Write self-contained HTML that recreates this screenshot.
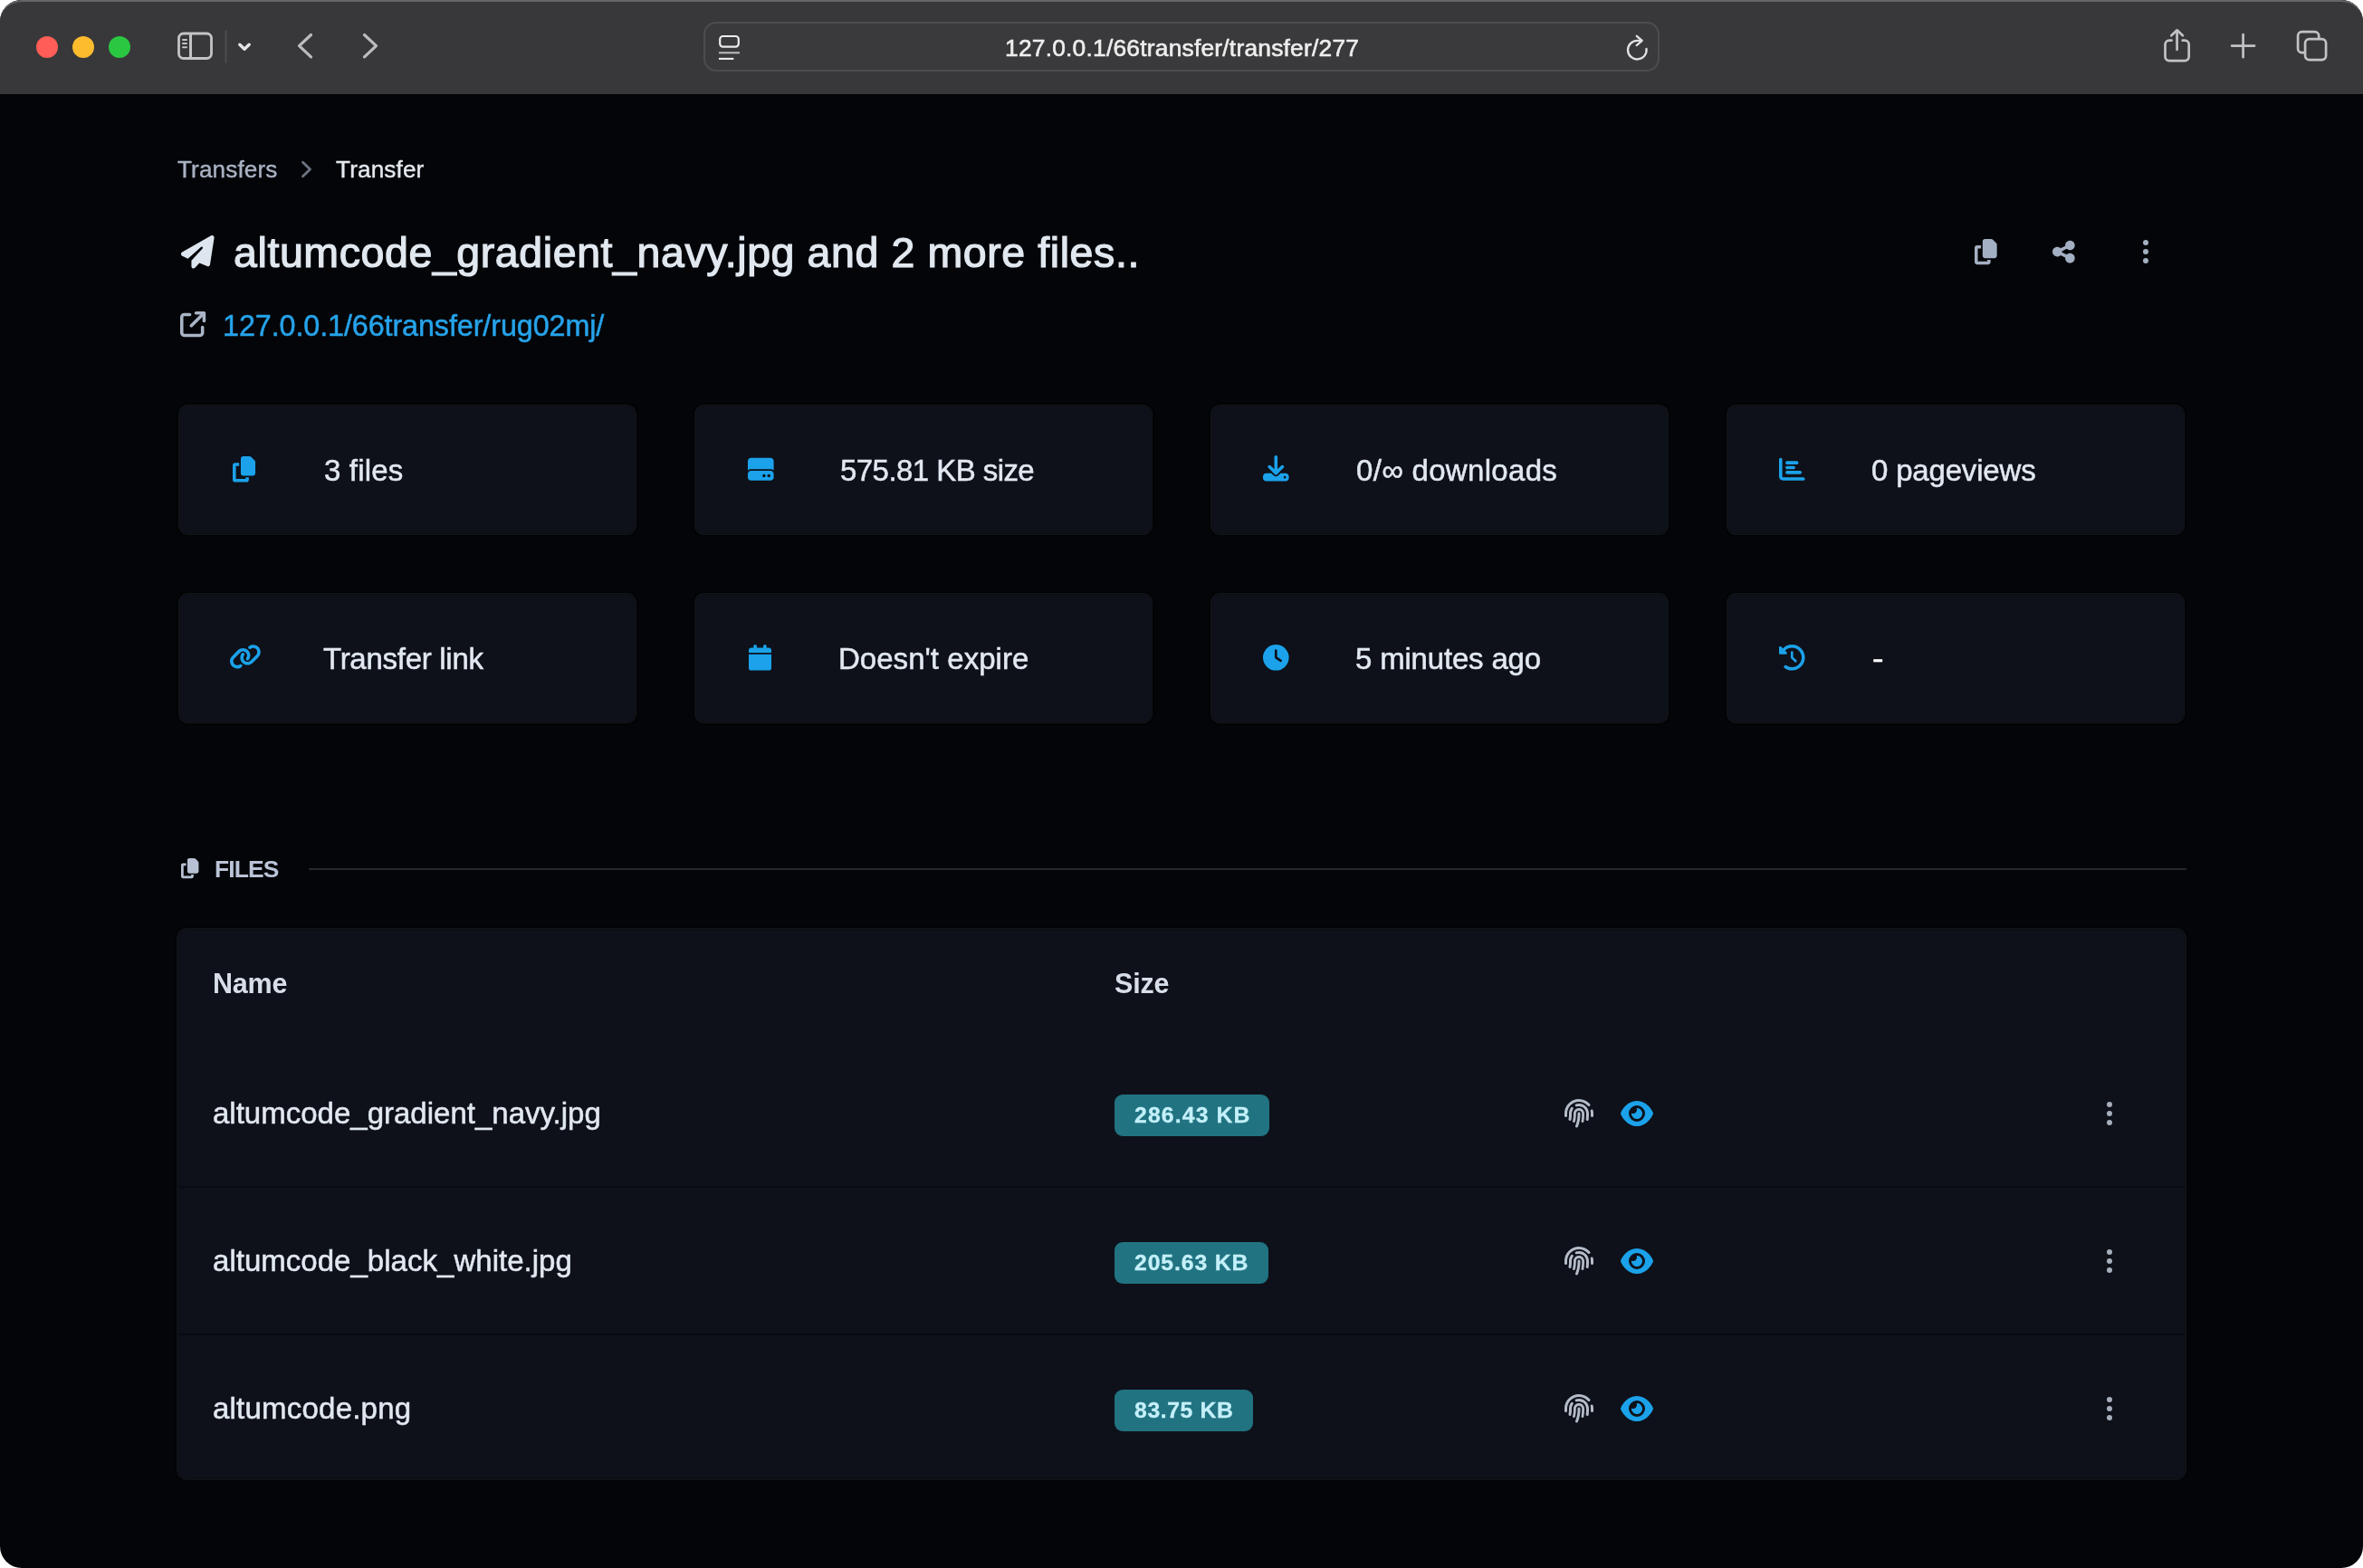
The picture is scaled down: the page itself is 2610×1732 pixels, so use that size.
<!DOCTYPE html>
<html lang="en"><head><meta charset="utf-8"><title>Transfer</title>
<style>
html,body{margin:0;padding:0;background:#fff;}
body{width:2610px;height:1732px;overflow:hidden;position:relative;font-family:"Liberation Sans",sans-serif;}
.win{position:absolute;left:0;top:0;width:2610px;height:1732px;border-radius:24px;background:#040508;overflow:hidden;}
.bar{position:absolute;left:0;top:0;width:2610px;height:104px;background:#38383a;}
.bar:before{content:"";position:absolute;left:0;top:0;width:2610px;height:60px;box-sizing:border-box;border-top:2px solid #656567;border-radius:24px 24px 0 0;}
.dot{position:absolute;width:24.6px;height:24.6px;border-radius:50%;top:39.7px;}
.url{position:absolute;left:777px;top:24px;width:1056px;height:55px;box-sizing:border-box;border:2px solid #4d4d4f;border-radius:14px;background:#3a3a3c;}
.ic{position:absolute;overflow:visible;}
.t{position:absolute;white-space:nowrap;line-height:1;will-change:transform;}
.card{position:absolute;width:506.4px;height:144.4px;box-sizing:border-box;background:#0e111a;border:1px solid #121618;box-shadow:inset 0 0 0 1px #0c1014,0 0 0 1.500px #020305;border-radius:10px;}
.tbl{position:absolute;left:194.800px;top:1024.800px;width:2220.100px;height:610.400px;box-sizing:border-box;background:#0e111a;border:1px solid #121618;box-shadow:inset 0 0 0 1px #0c1014,0 0 0 1.500px #020305;border-radius:11px;}
.sep{position:absolute;left:196.800px;width:2216.100px;height:2px;background:#080b12;}
.badge{position:absolute;height:46.2px;background:#217381;border-radius:9px;}
.hr{position:absolute;left:341px;top:959px;width:2074px;height:2px;background:#25282e;}
</style></head><body><div class="win">
<div class="bar">
<div class="dot" style="left:39.8px;background:#fe5e57"></div>
<div class="dot" style="left:79.8px;background:#fcbc2e"></div>
<div class="dot" style="left:119.7px;background:#2ac840"></div>

<svg class="ic" style="left:190px;top:28px" width="240" height="50" viewBox="190 28 240 50" fill="none" stroke-linecap="round" stroke-linejoin="round">
<rect x="197.500" y="37" width="36" height="27.500" rx="5.200" stroke="#c4c4c6" stroke-width="2.800"/>
<path d="M210.500 37.500V64" stroke="#c4c4c6" stroke-width="3"/>
<path d="M202 44h4M202 48h4M202 52.300h4" stroke="#c4c4c6" stroke-width="2"/>
<path d="M249.500 34.500V69" stroke="#4c4c4f" stroke-width="2"/>
<path d="M264.800 49.200l5.200 5 5.200-5" stroke="#e6e6e6" stroke-width="3.400"/>
<path d="M343.500 38.500L330.500 50.700l13 12.200" stroke="#bdbdbf" stroke-width="3.200"/>
<path d="M402.500 38.500l13 12.200-13 12.200" stroke="#bdbdbf" stroke-width="3.200"/>
</svg>
<div class="url"></div>
<svg class="ic" style="left:790px;top:34px" width="36" height="36" viewBox="790 34 36 36" fill="none" stroke-linecap="butt">
<rect x="795.200" y="40" width="20.600" height="11.600" rx="3.300" stroke="#ececec" stroke-width="2.200"/>
<path d="M794 58.300h23" stroke="#b9b9bb" stroke-width="2.100"/>
<path d="M794 64.900h16.300" stroke="#ececec" stroke-width="2.100"/>
</svg>
<svg class="ic" style="left:1790px;top:34px" width="40" height="40" viewBox="1790 34 40 40" fill="none" stroke="#e2e2e4" stroke-width="2.300" stroke-linecap="round" stroke-linejoin="round">
<path d="M1818.500 53.800A10.300 10.300 0 1 1 1808.300 44.900H1813"/>
<path d="M1807.800 39.800l5.900 5.100-6 5.200"/>
</svg>
<svg class="ic" style="left:2380px;top:26px" width="200" height="50" viewBox="2380 26 200 50" fill="none" stroke="#c2c2c4" stroke-width="2.700" stroke-linecap="round" stroke-linejoin="round">
<path d="M2398.500 44.700h-2.500a4.500 4.500 0 0 0-4.500 4.500v13.400a4.500 4.500 0 0 0 4.500 4.500h17.200a4.500 4.500 0 0 0 4.500-4.500V49.200a4.500 4.500 0 0 0-4.500-4.500h-2.500"/>
<path d="M2404.600 54.800V33.800M2398.300 39.300l6.300-6 6.300 6"/>
<path d="M2477.600 38.200v25M2465.100 50.600h25"/>
<path d="M2545 58.200h-2.400a4.500 4.500 0 0 1-4.500-4.500V39.600a4.500 4.500 0 0 1 4.500-4.500h14.100a4.500 4.500 0 0 1 4.500 4.500v2.300"/>
<rect x="2546.100" y="43.100" width="23" height="23" rx="4.500"/>
</svg>
</div>

<svg class="ic" style="left:330px;top:174px" width="20" height="26" viewBox="330 174 20 26" fill="none" stroke="#6b7482" stroke-width="2.800" stroke-linecap="round" stroke-linejoin="round"><path d="M334.500 179.200l8 7.800-8 7.800"/></svg>
<svg class="ic" style="left:200.20px;top:259.60px" width="36.60" height="36.60" viewBox="0 0 512 512"><path fill="#dde6ee" d="M498.100 5.600c10.100 7 15.400 19.100 13.500 31.200l-64 416c-1.500 9.700-7.400 18.200-16 23s-18.900 5.400-28 1.600L284 427.700l-68.500 74.100c-8.900 9.700-22.900 12.900-35.200 8.100S160 493.200 160 480V396.400c0-4 1.500-7.800 4.200-10.700L331.800 202.800c5.800-6.300 5.600-16-.4-22s-15.700-6.400-22-.7L106 360.800 17.700 316.600C7.100 311.300 .3 300.700 0 288.900s5.900-22.800 16.100-28.700l448-256c10.700-6.100 23.900-5.500 34 1.400z"/></svg>
<svg class="ic" style="left:199.30px;top:343.90px" width="28.20" height="28.20" viewBox="0 0 512 512"><path fill="#a9b5c6" d="M320 0c-17.700 0-32 14.300-32 32s14.300 32 32 32h82.700L201.400 265.400c-12.500 12.500-12.500 32.800 0 45.300s32.800 12.500 45.300 0L448 109.300V192c0 17.700 14.300 32 32 32s32-14.300 32-32V32c0-17.700-14.300-32-32-32H320zM80 32C35.800 32 0 67.800 0 112V432c0 44.200 35.800 80 80 80H400c44.200 0 80-35.800 80-80V320c0-17.700-14.300-32-32-32s-32 14.300-32 32V432c0 8.800-7.200 16-16 16H80c-8.800 0-16-7.200-16-16V112c0-8.800 7.200-16 16-16H192c17.700 0 32-14.300 32-32s-14.300-32-32-32H80z"/></svg>
<svg class="ic" style="left:2181.00px;top:264.00px" width="24.68" height="28.20" viewBox="0 0 448 512"><path fill="#a3afc2" d="M208 0H332.100c12.700 0 24.900 5.100 33.900 14.100l67.900 67.900c9 9 14.100 21.200 14.100 33.900V336c0 26.500-21.500 48-48 48H208c-26.500 0-48-21.500-48-48V48c0-26.500 21.500-48 48-48zM48 128h80v64H64V448H256V416h64v48c0 26.500-21.500 48-48 48H48c-26.500 0-48-21.500-48-48V176c0-26.500 21.500-48 48-48z"/></svg>
<svg class="ic" style="left:2267.00px;top:264.00px" width="24.68" height="28.20" viewBox="0 0 448 512"><path fill="#a3afc2" d="M352 224c53 0 96-43 96-96s-43-96-96-96s-96 43-96 96c0 4 .2 8 .7 11.900l-94.100 47C145.400 170.200 121.900 160 96 160c-53 0-96 43-96 96s43 96 96 96c25.900 0 49.400-10.200 66.600-26.900l94.100 47c-.5 3.900-.7 7.800-.7 11.900c0 53 43 96 96 96s96-43 96-96s-43-96-96-96c-25.900 0-49.400 10.200-66.600 26.900l-94.100-47c.5-3.900 .7-7.800 .7-11.900s-.2-8-.7-11.900l94.100-47C302.600 213.800 326.100 224 352 224z"/></svg>
<div style="position:absolute;left:2366.600px;top:264.5px;width:6.800px;height:6.800px;border-radius:50%;background:#a3afc2"></div>
<div style="position:absolute;left:2366.600px;top:274.5px;width:6.800px;height:6.800px;border-radius:50%;background:#a3afc2"></div>
<div style="position:absolute;left:2366.600px;top:284.5px;width:6.800px;height:6.800px;border-radius:50%;background:#a3afc2"></div>
<div class="card" style="left:196.7px;top:446.7px"></div>
<div class="card" style="left:766.7px;top:446.7px"></div>
<div class="card" style="left:1336.7px;top:446.7px"></div>
<div class="card" style="left:1906.7px;top:446.7px"></div>
<div class="card" style="left:196.7px;top:654.8px"></div>
<div class="card" style="left:766.7px;top:654.8px"></div>
<div class="card" style="left:1336.7px;top:654.8px"></div>
<div class="card" style="left:1906.7px;top:654.8px"></div>
<svg class="ic" style="left:257.20px;top:503.60px" width="25.03" height="28.60" viewBox="0 0 448 512"><path fill="#1ba2ea" d="M208 0H332.100c12.700 0 24.900 5.100 33.900 14.100l67.900 67.900c9 9 14.100 21.200 14.100 33.900V336c0 26.500-21.500 48-48 48H208c-26.500 0-48-21.500-48-48V48c0-26.500 21.500-48 48-48zM48 128h80v64H64V448H256V416h64v48c0 26.500-21.500 48-48 48H48c-26.500 0-48-21.500-48-48V176c0-26.500 21.500-48 48-48z"/></svg>
<svg class="ic" style="left:825.80px;top:503.70px" width="28.60" height="28.60" viewBox="0 0 512 512"><path fill="#1ba2ea" d="M0 96C0 60.700 28.700 32 64 32H448c35.300 0 64 28.700 64 64V280.400c-17-15.200-39.400-24.400-64-24.400H64c-24.600 0-47 9.200-64 24.400V96zM64 288H448c35.300 0 64 28.700 64 64v64c0 35.300-28.700 64-64 64H64c-35.300 0-64-28.700-64-64V352c0-35.300 28.700-64 64-64zM320 416a32 32 0 1 0 0-64 32 32 0 1 0 0 64zm128-32a32 32 0 1 0 -64 0 32 32 0 1 0 64 0z"/></svg>
<svg class="ic" style="left:1395.40px;top:503.40px" width="28.60" height="28.60" viewBox="0 0 512 512"><path fill="#1ba2ea" d="M288 32c0-17.700-14.300-32-32-32s-32 14.300-32 32V274.700l-73.400-73.400c-12.500-12.500-32.800-12.500-45.300 0s-12.500 32.800 0 45.300l128 128c12.500 12.500 32.800 12.500 45.300 0l128-128c12.500-12.500 12.500-32.800 0-45.300s-32.800-12.500-45.300 0L288 274.700V32zM64 352c-35.300 0-64 28.700-64 64v32c0 35.300 28.700 64 64 64H448c35.300 0 64-28.700 64-64V416c0-35.300-28.700-64-64-64H346.500l-45.300 45.300c-25 25-65.500 25-90.500 0L165.500 352H64zm368 56a24 24 0 1 1 0 48 24 24 0 1 1 0-48z"/></svg>
<svg class="ic" style="left:1965.30px;top:503.80px" width="28.60" height="28.60" viewBox="0 0 512 512"><path fill="#1ba2ea" d="M32 32c17.700 0 32 14.300 32 32V400c0 8.800 7.200 16 16 16H480c17.700 0 32 14.300 32 32s-14.300 32-32 32H80c-44.200 0-80-35.800-80-80V64C0 46.300 14.300 32 32 32zm96 96c0-17.700 14.300-32 32-32l192 0c17.700 0 32 14.300 32 32s-14.300 32-32 32l-192 0c-17.700 0-32-14.300-32-32zm32 64H288c17.700 0 32 14.300 32 32s-14.300 32-32 32H160c-17.700 0-32-14.300-32-32s14.300-32 32-32zm0 96H416c17.700 0 32 14.300 32 32s-14.300 32-32 32H160c-17.700 0-32-14.300-32-32s14.300-32 32-32z"/></svg>
<svg class="ic" style="left:252.50px;top:711.20px" width="35.75" height="28.60" viewBox="0 0 640 512"><path fill="#1ba2ea" d="M579.800 267.700c56.500-56.500 56.500-148 0-204.500c-50-50-128.800-56.500-186.300-15.400l-1.600 1.100c-14.400 10.300-17.700 30.300-7.400 44.600s30.300 17.700 44.600 7.400l1.600-1.100c32.100-22.900 76-19.300 103.800 8.600c31.500 31.500 31.500 82.500 0 114L422.300 334.800c-31.500 31.500-82.500 31.500-114 0c-27.900-27.900-31.500-71.800-8.600-103.800l1.100-1.600c10.300-14.400 6.900-34.400-7.400-44.600s-34.400-6.900-44.600 7.400l-1.100 1.600C206.500 251.200 213 330 263 380c56.500 56.500 148 56.500 204.500 0L579.800 267.700zM60.200 244.300c-56.500 56.500-56.500 148 0 204.500c50 50 128.800 56.500 186.300 15.400l1.600-1.100c14.400-10.300 17.700-30.300 7.400-44.600s-30.300-17.700-44.600-7.400l-1.600 1.100c-32.100 22.900-76 19.300-103.800-8.600C74 372 74 321 105.500 289.500L217.700 177.200c31.500-31.500 82.500-31.500 114 0c27.900 27.900 31.500 71.800 8.600 103.900l-1.100 1.600c-10.300 14.400-6.900 34.400 7.400 44.600s34.400 6.900 44.600-7.400l1.100-1.600C433.500 260.800 427 182 377 132c-56.500-56.500-148-56.500-204.500 0L60.200 244.300z"/></svg>
<svg class="ic" style="left:827.20px;top:711.70px" width="25.03" height="28.60" viewBox="0 0 448 512"><path fill="#1ba2ea" d="M96 32V64H48C21.500 64 0 85.500 0 112v48H448V112c0-26.500-21.500-48-48-48H352V32c0-17.700-14.300-32-32-32s-32 14.300-32 32V64H160V32c0-17.700-14.300-32-32-32S96 14.300 96 32zM448 192H0V464c0 26.500 21.500 48 48 48H400c26.500 0 48-21.500 48-48V192z"/></svg>
<svg class="ic" style="left:1395.20px;top:711.70px" width="28.60" height="28.60" viewBox="0 0 512 512"><path fill="#1ba2ea" d="M256 0a256 256 0 1 1 0 512A256 256 0 1 1 256 0zM232 120V256c0 8 4 15.500 10.700 20l96 64c11 7.400 25.900 4.400 33.300-6.700s4.400-25.900-6.700-33.300L280 243.200V120c0-13.300-10.700-24-24-24s-24 10.700-24 24z"/></svg>
<svg class="ic" style="left:1965.00px;top:711.70px" width="28.60" height="28.60" viewBox="0 0 512 512"><path fill="#1ba2ea" d="M75 75L41 41C25.900 25.900 0 36.600 0 57.900V168c0 13.300 10.700 24 24 24H134.100c21.400 0 32.100-25.900 17-41l-30.800-30.800C155 85.500 203 64 256 64c106 0 192 86 192 192s-86 192-192 192c-40.800 0-78.600-12.700-109.700-34.400c-14.500-10.100-34.400-6.600-44.600 7.900s-6.600 34.400 7.900 44.600C151.200 495 201.700 512 256 512c141.400 0 256-114.600 256-256S397.400 0 256 0C185.300 0 121.300 28.700 75 75zm181 53c-13.300 0-24 10.700-24 24V256c0 6.400 2.500 12.500 7 17l72 72c9.400 9.400 24.600 9.400 33.900 0s9.400-24.600 0-33.900l-65-65V152c0-13.300-10.700-24-24-24z"/></svg>
<svg class="ic" style="left:200.40px;top:948.00px" width="19.43" height="22.20" viewBox="0 0 448 512"><path fill="#b7c1d3" d="M208 0H332.100c12.700 0 24.900 5.100 33.900 14.100l67.900 67.900c9 9 14.100 21.200 14.100 33.900V336c0 26.500-21.500 48-48 48H208c-26.500 0-48-21.500-48-48V48c0-26.500 21.500-48 48-48zM48 128h80v64H64V448H256V416h64v48c0 26.500-21.500 48-48 48H48c-26.500 0-48-21.500-48-48V176c0-26.500 21.500-48 48-48z"/></svg>
<div class="hr"></div>
<div class="tbl"></div>
<div class="sep" style="top:1310px"></div>
<div class="sep" style="top:1473px"></div>
<div class="badge" style="left:1231px;top:1208.5px;width:171px"></div>
<svg class="ic" style="left:1727.80px;top:1214.00px" width="32.00" height="32.00" viewBox="0 0 512 512"><path fill="#b4bcc9" d="M48 256C48 141.100 141.100 48 256 48c63.100 0 119.600 28.100 157.800 72.500c8.600 10.100 23.800 11.200 33.800 2.600s11.200-23.800 2.600-33.800C403.300 34.600 333.700 0 256 0C114.600 0 0 114.600 0 256v40c0 13.300 10.700 24 24 24s24-10.700 24-24V256zm458.500-52.900c-2.700-13-15.500-21.300-28.400-18.500s-21.300 15.500-18.500 28.400c2.900 13.900 4.500 28.300 4.500 43.100v40c0 13.300 10.700 24 24 24s24-10.700 24-24V256c0-18.100-1.900-35.800-5.500-52.900zM256 80c-19 0-37.400 3-54.500 8.600c-15.200 5-18.700 23.700-8.300 35.900c7.100 8.300 18.800 10.800 29.400 7.900c10.600-2.900 21.800-4.400 33.400-4.400c70.700 0 128 57.300 128 128v24.900c0 25.200-1.500 50.300-4.400 75.300c-1.700 14.600 9.400 27.800 24.200 27.800c11.800 0 21.900-8.600 23.300-20.300c3.300-27.400 5-55 5-82.700V256c0-97.200-78.800-176-176-176zM150.700 148.700c-9.100-10.600-25.300-11.400-33.900-.4C93.700 178 80 215.400 80 256v24.900c0 24.200-2.600 48.400-7.800 71.900C68.800 368.400 80.100 384 96.100 384c10.500 0 19.900-7 22.200-17.300c6.400-28.100 9.700-56.800 9.700-85.800V256c0-27.200 8.500-52.400 22.900-73.100c7.200-10.400 8-24.600-.2-34.200zM256 160c-53 0-96 43-96 96v24.900c0 35.900-4.600 71.500-13.800 106.100c-3.800 14.300 6.700 29 21.500 29c9.500 0 17.900-6.200 20.400-15.400c10.500-39 15.900-79.200 15.900-119.700V256c0-28.700 23.300-52 52-52s52 23.300 52 52v24.900c0 36.300-3.500 72.400-10.400 107.900c-2.700 13.900 7.700 27.200 21.800 27.200c10.200 0 19-7 21-17c7.700-38.800 11.600-78.300 11.600-118.100V256c0-53-43-96-96-96zm24 96c0-13.300-10.700-24-24-24s-24 10.700-24 24v24.900c0 59.900-11 119.300-32.500 175.200l-5.900 15.300c-4.800 12.400 1.400 26.300 13.800 31s26.300-1.400 31-13.800l5.900-15.300C267.900 411.900 280 346.700 280 280.900V256z"/></svg>
<svg class="ic" style="left:1790.00px;top:1214.00px" width="36.00" height="32.00" viewBox="0 0 576 512"><path fill="#1ba2ea" d="M288 32c-80.800 0-145.500 36.800-192.600 80.600C48.600 156 17.300 208 2.500 243.700c-3.300 7.900-3.300 16.700 0 24.600C17.300 304 48.600 356 95.400 399.400C142.500 443.200 207.200 480 288 480s145.500-36.800 192.600-80.600c46.800-43.500 78.100-95.400 93-131.100c3.300-7.900 3.300-16.700 0-24.600c-14.900-35.700-46.200-87.700-93-131.100C433.500 68.800 368.800 32 288 32zM144 256a144 144 0 1 1 288 0 144 144 0 1 1 -288 0zm144-64c0 35.300-28.700 64-64 64c-7.100 0-13.900-1.200-20.300-3.300c-5.500-1.800-11.900 1.600-11.700 7.400c.3 6.900 1.300 13.800 3.200 20.700c13.700 51.200 66.400 81.600 117.600 67.900s81.600-66.400 67.900-117.600c-11.100-41.500-47.800-69.400-88.600-71.100c-5.800-.2-9.200 6.100-7.400 11.700c2.100 6.400 3.300 13.200 3.300 20.300z"/></svg>
<div style="position:absolute;left:2326.600px;top:1216.6px;width:6.800px;height:6.800px;border-radius:50%;background:#a7aebb"></div>
<div style="position:absolute;left:2326.600px;top:1226.6px;width:6.800px;height:6.800px;border-radius:50%;background:#a7aebb"></div>
<div style="position:absolute;left:2326.600px;top:1236.6px;width:6.800px;height:6.800px;border-radius:50%;background:#a7aebb"></div>
<div class="badge" style="left:1231px;top:1371.5px;width:170.1px"></div>
<svg class="ic" style="left:1727.80px;top:1377.00px" width="32.00" height="32.00" viewBox="0 0 512 512"><path fill="#b4bcc9" d="M48 256C48 141.100 141.100 48 256 48c63.100 0 119.600 28.100 157.800 72.500c8.600 10.100 23.800 11.200 33.800 2.600s11.200-23.800 2.600-33.800C403.300 34.600 333.700 0 256 0C114.600 0 0 114.600 0 256v40c0 13.300 10.700 24 24 24s24-10.700 24-24V256zm458.500-52.900c-2.700-13-15.500-21.300-28.400-18.500s-21.300 15.500-18.500 28.400c2.900 13.900 4.500 28.300 4.500 43.100v40c0 13.300 10.700 24 24 24s24-10.700 24-24V256c0-18.100-1.900-35.800-5.500-52.900zM256 80c-19 0-37.400 3-54.500 8.600c-15.200 5-18.700 23.700-8.300 35.900c7.100 8.300 18.800 10.800 29.400 7.900c10.600-2.900 21.800-4.400 33.400-4.400c70.700 0 128 57.300 128 128v24.900c0 25.200-1.500 50.300-4.400 75.300c-1.700 14.600 9.400 27.800 24.200 27.800c11.800 0 21.900-8.600 23.300-20.300c3.300-27.400 5-55 5-82.700V256c0-97.200-78.800-176-176-176zM150.700 148.700c-9.100-10.600-25.300-11.400-33.900-.4C93.700 178 80 215.400 80 256v24.900c0 24.200-2.600 48.400-7.800 71.900C68.800 368.400 80.100 384 96.100 384c10.500 0 19.900-7 22.200-17.300c6.400-28.100 9.700-56.800 9.700-85.800V256c0-27.200 8.500-52.400 22.900-73.100c7.200-10.400 8-24.600-.2-34.200zM256 160c-53 0-96 43-96 96v24.900c0 35.900-4.600 71.500-13.800 106.100c-3.800 14.300 6.700 29 21.500 29c9.500 0 17.900-6.200 20.400-15.400c10.500-39 15.900-79.200 15.900-119.700V256c0-28.700 23.300-52 52-52s52 23.300 52 52v24.900c0 36.300-3.500 72.400-10.400 107.900c-2.700 13.900 7.700 27.200 21.800 27.200c10.200 0 19-7 21-17c7.700-38.800 11.600-78.300 11.600-118.100V256c0-53-43-96-96-96zm24 96c0-13.300-10.700-24-24-24s-24 10.700-24 24v24.900c0 59.900-11 119.300-32.500 175.200l-5.900 15.300c-4.800 12.400 1.400 26.300 13.800 31s26.300-1.400 31-13.800l5.900-15.300C267.900 411.900 280 346.700 280 280.900V256z"/></svg>
<svg class="ic" style="left:1790.00px;top:1377.00px" width="36.00" height="32.00" viewBox="0 0 576 512"><path fill="#1ba2ea" d="M288 32c-80.800 0-145.500 36.800-192.600 80.600C48.600 156 17.300 208 2.500 243.700c-3.300 7.900-3.300 16.700 0 24.600C17.300 304 48.600 356 95.400 399.400C142.500 443.200 207.200 480 288 480s145.500-36.800 192.600-80.600c46.800-43.500 78.100-95.400 93-131.100c3.300-7.900 3.300-16.700 0-24.600c-14.900-35.700-46.200-87.700-93-131.100C433.500 68.800 368.800 32 288 32zM144 256a144 144 0 1 1 288 0 144 144 0 1 1 -288 0zm144-64c0 35.300-28.700 64-64 64c-7.100 0-13.900-1.200-20.300-3.300c-5.500-1.800-11.900 1.600-11.700 7.400c.3 6.900 1.300 13.800 3.200 20.700c13.700 51.200 66.400 81.600 117.600 67.900s81.600-66.400 67.900-117.600c-11.100-41.500-47.800-69.400-88.600-71.100c-5.800-.2-9.200 6.100-7.400 11.700c2.100 6.400 3.300 13.200 3.300 20.300z"/></svg>
<div style="position:absolute;left:2326.600px;top:1379.6px;width:6.800px;height:6.800px;border-radius:50%;background:#a7aebb"></div>
<div style="position:absolute;left:2326.600px;top:1389.6px;width:6.800px;height:6.800px;border-radius:50%;background:#a7aebb"></div>
<div style="position:absolute;left:2326.600px;top:1399.6px;width:6.800px;height:6.800px;border-radius:50%;background:#a7aebb"></div>
<div class="badge" style="left:1231px;top:1534.5px;width:153.2px"></div>
<svg class="ic" style="left:1727.80px;top:1540.00px" width="32.00" height="32.00" viewBox="0 0 512 512"><path fill="#b4bcc9" d="M48 256C48 141.100 141.100 48 256 48c63.100 0 119.600 28.100 157.800 72.500c8.600 10.100 23.800 11.200 33.800 2.600s11.200-23.800 2.600-33.800C403.300 34.600 333.700 0 256 0C114.600 0 0 114.600 0 256v40c0 13.300 10.700 24 24 24s24-10.700 24-24V256zm458.500-52.900c-2.700-13-15.500-21.300-28.400-18.500s-21.300 15.500-18.500 28.400c2.900 13.900 4.500 28.300 4.500 43.100v40c0 13.300 10.700 24 24 24s24-10.700 24-24V256c0-18.100-1.900-35.800-5.500-52.900zM256 80c-19 0-37.400 3-54.500 8.600c-15.200 5-18.700 23.700-8.300 35.900c7.100 8.300 18.800 10.800 29.400 7.900c10.600-2.900 21.800-4.400 33.400-4.400c70.700 0 128 57.300 128 128v24.900c0 25.200-1.500 50.300-4.400 75.300c-1.700 14.600 9.400 27.800 24.200 27.800c11.800 0 21.900-8.600 23.300-20.300c3.300-27.400 5-55 5-82.700V256c0-97.200-78.800-176-176-176zM150.700 148.700c-9.100-10.600-25.300-11.400-33.900-.4C93.700 178 80 215.400 80 256v24.900c0 24.200-2.600 48.400-7.800 71.900C68.800 368.400 80.100 384 96.100 384c10.500 0 19.900-7 22.200-17.300c6.400-28.100 9.700-56.800 9.700-85.800V256c0-27.200 8.500-52.400 22.900-73.100c7.200-10.400 8-24.600-.2-34.200zM256 160c-53 0-96 43-96 96v24.900c0 35.900-4.600 71.500-13.800 106.100c-3.800 14.300 6.700 29 21.500 29c9.500 0 17.900-6.200 20.400-15.400c10.500-39 15.900-79.200 15.900-119.700V256c0-28.700 23.300-52 52-52s52 23.300 52 52v24.900c0 36.300-3.500 72.400-10.400 107.900c-2.700 13.900 7.700 27.200 21.800 27.200c10.200 0 19-7 21-17c7.700-38.800 11.600-78.300 11.600-118.100V256c0-53-43-96-96-96zm24 96c0-13.300-10.700-24-24-24s-24 10.700-24 24v24.900c0 59.900-11 119.300-32.500 175.200l-5.900 15.300c-4.800 12.400 1.400 26.300 13.800 31s26.300-1.400 31-13.800l5.900-15.300C267.900 411.900 280 346.700 280 280.900V256z"/></svg>
<svg class="ic" style="left:1790.00px;top:1540.00px" width="36.00" height="32.00" viewBox="0 0 576 512"><path fill="#1ba2ea" d="M288 32c-80.800 0-145.500 36.800-192.600 80.600C48.600 156 17.300 208 2.500 243.700c-3.300 7.900-3.300 16.700 0 24.600C17.300 304 48.600 356 95.400 399.400C142.500 443.200 207.200 480 288 480s145.500-36.800 192.600-80.600c46.800-43.500 78.100-95.400 93-131.100c3.300-7.900 3.300-16.700 0-24.600c-14.900-35.700-46.200-87.700-93-131.100C433.500 68.800 368.800 32 288 32zM144 256a144 144 0 1 1 288 0 144 144 0 1 1 -288 0zm144-64c0 35.300-28.700 64-64 64c-7.100 0-13.900-1.200-20.300-3.300c-5.500-1.800-11.900 1.600-11.700 7.400c.3 6.900 1.300 13.800 3.200 20.700c13.700 51.200 66.400 81.600 117.600 67.900s81.600-66.400 67.900-117.600c-11.100-41.500-47.800-69.400-88.600-71.100c-5.800-.2-9.200 6.100-7.400 11.700c2.100 6.400 3.300 13.200 3.300 20.300z"/></svg>
<div style="position:absolute;left:2326.600px;top:1542.6px;width:6.800px;height:6.800px;border-radius:50%;background:#a7aebb"></div>
<div style="position:absolute;left:2326.600px;top:1552.6px;width:6.800px;height:6.800px;border-radius:50%;background:#a7aebb"></div>
<div style="position:absolute;left:2326.600px;top:1562.6px;width:6.800px;height:6.800px;border-radius:50%;background:#a7aebb"></div>
<div class="t" id="url" style="left:1110.25px;top:39.89px;font-size:26.4px;color:#eeeeee;letter-spacing:0.206px;-webkit-text-stroke:0.6px #eeeeee;">127.0.0.1/66transfer/transfer/277</div>
<div class="t" id="bc1" style="left:195.53px;top:173.65px;font-size:26.1px;color:#a9b2c3;letter-spacing:0.146px;-webkit-text-stroke:0.4px #a9b2c3;">Transfers</div>
<div class="t" id="bc2" style="left:371.48px;top:173.65px;font-size:26.1px;color:#e4e9f0;letter-spacing:0.156px;-webkit-text-stroke:0.4px #e4e9f0;">Transfer</div>
<div class="t" id="title" style="left:258.06px;top:255.83px;font-size:46.5px;color:#e2e8f0;letter-spacing:0.593px;-webkit-text-stroke:1.2px #e2e8f0;">altumcode_gradient_navy.jpg and 2 more files..</div>
<div class="t" id="lnk" style="left:245.88px;top:343.84px;font-size:32.3px;color:#26a3ea;letter-spacing:-0.086px;-webkit-text-stroke:0.5px #26a3ea;">127.0.0.1/66transfer/rug02mj/</div>
<div class="t" id="c1" style="left:357.70px;top:502.91px;font-size:33px;color:#e2e8f0;letter-spacing:0.169px;-webkit-text-stroke:0.5px #e2e8f0;">3 files</div>
<div class="t" id="c2" style="left:927.80px;top:502.91px;font-size:33px;color:#e2e8f0;letter-spacing:-0.559px;-webkit-text-stroke:0.5px #e2e8f0;">575.81 KB size</div>
<div class="t" id="c3" style="left:1497.82px;top:502.91px;font-size:33px;color:#e2e8f0;letter-spacing:0.317px;-webkit-text-stroke:0.5px #e2e8f0;">0/∞ downloads</div>
<div class="t" id="c4" style="left:2067.48px;top:502.91px;font-size:33px;color:#e2e8f0;letter-spacing:-0.177px;-webkit-text-stroke:0.5px #e2e8f0;">0 pageviews</div>
<div class="t" id="c5" style="left:357.45px;top:710.91px;font-size:33px;color:#e2e8f0;letter-spacing:-0.278px;-webkit-text-stroke:0.5px #e2e8f0;">Transfer link</div>
<div class="t" id="c6" style="left:926.14px;top:710.91px;font-size:33px;color:#e2e8f0;letter-spacing:0.029px;-webkit-text-stroke:0.5px #e2e8f0;">Doesn't expire</div>
<div class="t" id="c7" style="left:1497.24px;top:710.91px;font-size:33px;color:#e2e8f0;letter-spacing:-0.185px;-webkit-text-stroke:0.5px #e2e8f0;">5 minutes ago</div>
<div class="t" id="files" style="left:237.33px;top:947.21px;font-size:26.4px;color:#bac3d7;letter-spacing:-0.850px;font-weight:700;">FILES</div>
<div class="t" id="thn" style="left:234.64px;top:1070.64px;font-size:30.5px;color:#d7deea;letter-spacing:-0.230px;font-weight:700;">Name</div>
<div class="t" id="ths" style="left:1230.76px;top:1070.64px;font-size:30.5px;color:#d7deea;letter-spacing:-0.186px;font-weight:700;">Size</div>
<div class="t" id="r1" style="left:234.88px;top:1212.91px;font-size:33px;color:#e2e8f0;letter-spacing:0.004px;-webkit-text-stroke:0.5px #e2e8f0;">altumcode_gradient_navy.jpg</div>
<div class="t" id="r2" style="left:234.88px;top:1375.91px;font-size:33px;color:#e2e8f0;letter-spacing:0.025px;-webkit-text-stroke:0.5px #e2e8f0;">altumcode_black_white.jpg</div>
<div class="t" id="r3" style="left:234.88px;top:1538.91px;font-size:33px;color:#e2e8f0;letter-spacing:0.219px;-webkit-text-stroke:0.5px #e2e8f0;">altumcode.png</div>
<div class="t" id="b1" style="left:1253.39px;top:1220.01px;font-size:24.8px;color:#c4f0fa;letter-spacing:1.119px;font-weight:700;-webkit-text-stroke:0.3px #c4f0fa;">286.43 KB</div>
<div class="t" id="b2" style="left:1253.39px;top:1383.01px;font-size:24.8px;color:#c4f0fa;letter-spacing:0.869px;font-weight:700;-webkit-text-stroke:0.3px #c4f0fa;">205.63 KB</div>
<div class="t" id="b3" style="left:1253.07px;top:1546.01px;font-size:24.8px;color:#c4f0fa;letter-spacing:0.590px;font-weight:700;-webkit-text-stroke:0.3px #c4f0fa;">83.75 KB</div>
<div class="t" style="left:2067.9px;top:711.3px;font-size:33px;color:#fff;transform:scaleX(1.14);transform-origin:0 0;-webkit-text-stroke:0.5px #fff">-</div>
</div></body></html>
